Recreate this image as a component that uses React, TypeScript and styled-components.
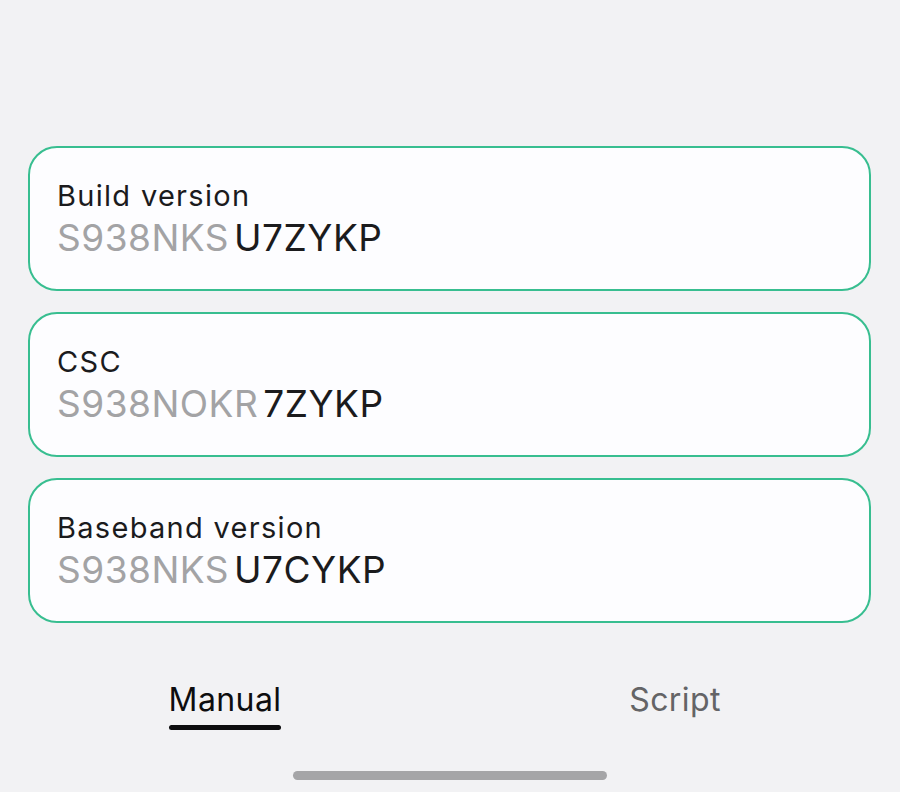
import React from "react";
import styled, { createGlobalStyle } from "styled-components";

const Global = createGlobalStyle`
  html, body { margin: 0; padding: 0; background: #f2f2f4; }
  body { font-family: Inter, "Noto Sans", "Liberation Sans", sans-serif; -webkit-font-smoothing: antialiased; }
  #root { min-height: 792px; }
`;

const Page = styled.div`
  width: 900px;
  height: 792px;
  display: flex;
  flex-direction: column;
  background: #f2f2f4;
  overflow: hidden;
`;

const CardList = styled.div`
  display: flex;
  flex-direction: column;
  gap: 21px;
  padding: 146px 29px 0 28px;
`;

const Card = styled.div`
  height: 145px;
  box-sizing: border-box;
  border: 2.5px solid #38be90;
  border-radius: 29px;
  background: #fdfdff;
  padding: 29.5px 27px 0;
  display: flex;
  flex-direction: column;
`;

const Title = styled.div`
  font-size: 29px;
  line-height: 36px;
  color: #1b1b1d;
  letter-spacing: 1.3px;
`;

const Value = styled.div`
  font-size: 37px;
  line-height: 44px;
  margin-top: 2px;
  letter-spacing: 0.5px;
  display: flex;
`;

const Prefix = styled.span`
  color: #a3a3a5;
`;

const Suffix = styled.span`
  color: #1b1b1d;
  margin-left: 5px;
`;

const Tabs = styled.div`
  display: flex;
  margin-top: 57px;
`;

const Tab = styled.div`
  flex: 1;
  display: flex;
  justify-content: center;
`;

const TabLabel = styled.div<{ $active?: boolean }>`
  position: relative;
  font-size: 32px;
  line-height: 40px;
  letter-spacing: 0.4px;
  color: ${(p) => (p.$active ? "#0d0d0f" : "#646466")};
  padding-bottom: 10px;

  &::after {
    content: "";
    display: ${(p) => (p.$active ? "block" : "none")};
    position: absolute;
    left: 0;
    right: 0;
    bottom: 0;
    height: 5px;
    border-radius: 3px;
    background: #0d0d0f;
  }
`;

const HomeBarRow = styled.div`
  display: flex;
  justify-content: center;
  margin-top: 41px;
`;

const HomeBar = styled.div`
  width: 314px;
  height: 9px;
  border-radius: 5px;
  background: #a5a5a7;
`;

const items = [
  { title: "Build version", prefix: "S938NKS", suffix: "U7ZYKP" },
  { title: "CSC", prefix: "S938NOKR", suffix: "7ZYKP" },
  { title: "Baseband version", prefix: "S938NKS", suffix: "U7CYKP" },
];

export default function App() {
  return (
    <Page>
      <Global />
      <CardList>
        {items.map((it) => (
          <Card key={it.title}>
            <Title>{it.title}</Title>
            <Value>
              <Prefix>{it.prefix}</Prefix>
              <Suffix>{it.suffix}</Suffix>
            </Value>
          </Card>
        ))}
      </CardList>
      <Tabs>
        <Tab>
          <TabLabel $active>Manual</TabLabel>
        </Tab>
        <Tab>
          <TabLabel>Script</TabLabel>
        </Tab>
      </Tabs>
      <HomeBarRow>
        <HomeBar />
      </HomeBarRow>
    </Page>
  );
}
